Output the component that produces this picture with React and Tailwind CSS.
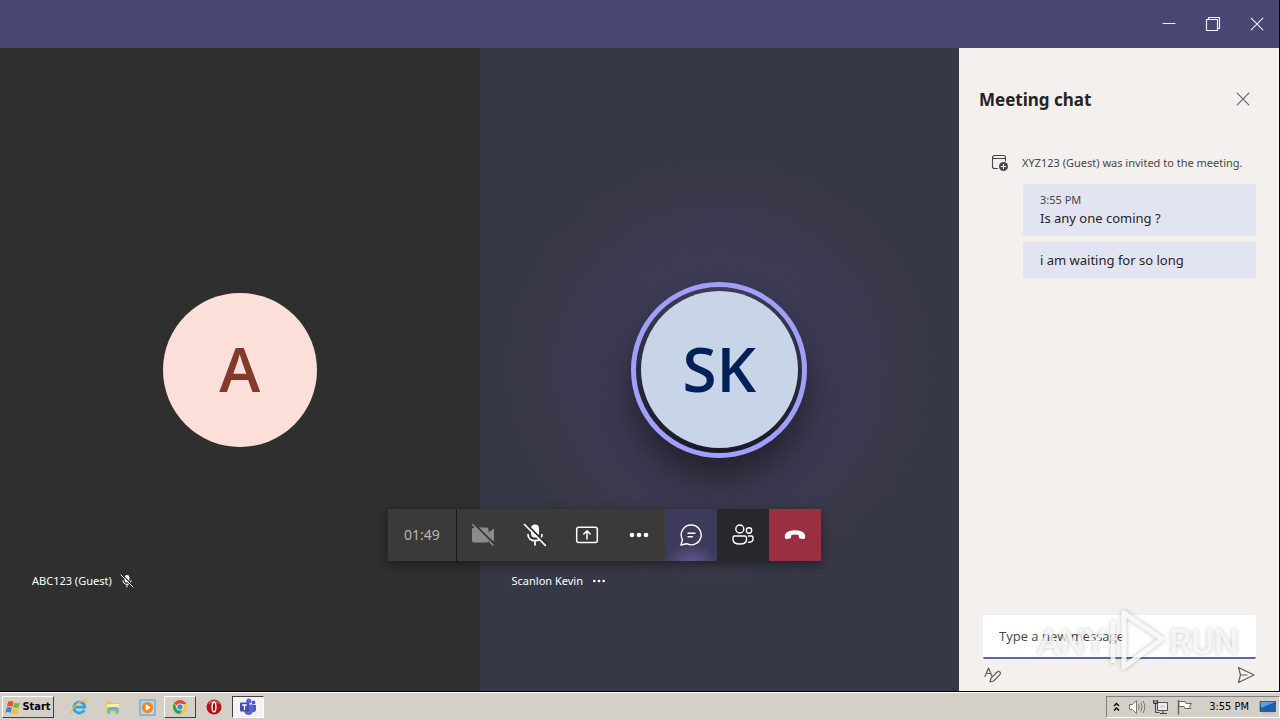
import React from "react";

const s = { fill: "none", stroke: "currentColor", strokeLinecap: "round", strokeLinejoin: "round" };

function MicOff({ size = 24 }) {
  return (
    <svg width={size} height={size} viewBox="0 0 24 24" {...s} strokeWidth="1.4">
      <rect x="8" y="1.500" width="8" height="13" rx="4" fill="currentColor" stroke="none" />
      <path d="M5 11.500c0 3.800 3 6.200 7 6.200s7-2.400 7-6.200M12 17.700V22" strokeWidth="1.700" />
      <path d="M2.800.500L23.600 21.300" stroke="#333232" strokeWidth="2" />
      <path d="M1.500 1.500L22.300 22.300" strokeWidth="1.700" />
    </svg>
  );
}

function CameraOff() {
  return (
    <svg width="24" height="24" viewBox="0 0 24 24" className="text-[#8b8b8b]">
      <path fill="currentColor" d="M3 4.500h12.500a2 2 0 0 1 2 2v2.700l4.700-3.200c.4-.2.8 0 .8.500v11c0 .5-.4.700-.8.500l-4.700-3.200v2.700a2 2 0 0 1-2 2H3a2 2 0 0 1-2-2v-11a2 2 0 0 1 2-2z" />
      <path d="M2.800.8L24 21.800" stroke="#3b3a39" strokeWidth="2.200" />
      <path d="M1.300 1.300L22.500 22.500" stroke="currentColor" strokeWidth="1.400" />
    </svg>
  );
}

function Share() {
  return (
    <svg width="24" height="24" viewBox="0 0 24 24" {...s} strokeWidth="1.500">
      <rect x="1.700" y="4.200" width="20.600" height="15.400" rx="2" />
      <path d="M12 16V8M8.800 11L12 7.700l3.200 3.300" />
    </svg>
  );
}

function Dots({ size = 24, r = 2.2 }) {
  return (
    <svg width={size} height={size} viewBox="0 0 24 24" fill="currentColor">
      <circle cx="5" cy="12" r={r} />
      <circle cx="12" cy="12" r={r} />
      <circle cx="19" cy="12" r={r} />
    </svg>
  );
}

function ChatBubble() {
  return (
    <svg width="24" height="24" viewBox="0 0 24 24" {...s} strokeWidth="1.400">
      <path d="M12.200 2a9.900 9.900 0 1 1-4.500 18.700L2 22l1.400-5.400A9.900 9.900 0 0 1 12.200 2z" />
      <path d="M9 10.300h7M9 13.800h4.500" />
    </svg>
  );
}

function People() {
  return (
    <svg width="24" height="24" viewBox="0 0 24 24" {...s} strokeWidth="1.400">
      <circle cx="8.800" cy="6" r="4" />
      <circle cx="18" cy="7.500" r="2.700" />
      <path d="M3.600 13h10.200c1 0 1.700.7 1.700 1.700v1.500c0 3.200-2.800 4.800-6.700 4.800S2 19.400 2 16.200v-1.500c0-1 .6-1.700 1.600-1.700z" />
      <path d="M17.500 13h3c.9 0 1.500.6 1.500 1.500v1.200c0 2.400-1.500 3.600-4.500 3.600" />
    </svg>
  );
}

function HangUp() {
  return (
    <svg width="24" height="24" viewBox="0 0 24 24" fill="currentColor">
      <path d="M12 7.300c4.600 0 8.200 1.300 9.600 3.700.7 1.300.8 2.700.4 4-.3.900-1 1.300-1.900 1.100l-2.800-.6c-.8-.2-1.300-.8-1.400-1.600l-.2-1.800c-2.300-.8-5.100-.8-7.400 0l-.2 1.800c-.1.800-.6 1.400-1.400 1.600l-2.800.6c-.9.200-1.600-.2-1.900-1.100-.4-1.300-.3-2.700.4-4C3.800 8.600 7.400 7.300 12 7.300z" />
    </svg>
  );
}

function Close({ size }) {
  return (
    <svg width={size} height={size} viewBox="0 0 14 14" {...s} strokeWidth="1.100">
      <path d="M1.200 1.200l11.600 11.600M12.800 1.200L1.200 12.800" />
    </svg>
  );
}

function TitleBar() {
  const button = "grid h-12 w-11 place-items-center";
  return (
    <header className="flex h-12 shrink-0 justify-end bg-[#484673] text-[#f0eff8]">
      <button aria-label="Minimize" className={button}>
        <svg width="14" height="14" viewBox="0 0 14 14" {...s}><path d="M1 6.500h12" /></svg>
      </button>
      <button aria-label="Restore" className={button}>
        <svg width="16" height="16" viewBox="0 0 16 16" {...s} strokeWidth="1.200">
          <path d="M1.500 3.500h11v11h-11zM3.500 3.500v-2h11v11h-2" />
        </svg>
      </button>
      <button aria-label="Close window" className={button}><Close size={14} /></button>
    </header>
  );
}

function CallBar() {
  const cell = "grid size-13 place-items-center";
  return (
    <div className="absolute bottom-[130px] left-[388px] flex bg-[#3b3a39] text-white shadow-[0_3px_10px_rgba(0,0,0,0.45)]">
      <time className="grid h-13 w-[69px] place-items-center border-r border-[#161616] text-sm text-[#b8b7b6]">01:49</time>
      <button aria-label="Turn camera on" className={cell}><CameraOff /></button>
      <button aria-label="Unmute" className={cell}><MicOff /></button>
      <button aria-label="Share" className={cell}><Share /></button>
      <button aria-label="More actions" className={cell}><Dots r={2.3} /></button>
      <button aria-label="Chat" className={`${cell} bg-[#3d3b5c] bg-[radial-gradient(ellipse_26px_16px_at_50%_100%,#5b588f,#3d3b5c)]`}><ChatBubble /></button>
      <button aria-label="Participants" className={`${cell} bg-[#28272c]`}><People /></button>
      <button aria-label="Hang up" className={`${cell} bg-[#9b2f42]`}><HangUp /></button>
    </div>
  );
}

function Stage() {
  const tile = "grid grid-rows-[1fr_auto_1fr]";
  const label = "row-start-3 flex h-5 items-center gap-2 self-end mb-[100px] pl-8 text-[11px] text-white";
  return (
    <main className="relative grid flex-1 grid-cols-2">
      <section className={`${tile} bg-[#2f2f2f]`}>
        <div className="row-start-2 grid size-[154px] place-items-center justify-self-center rounded-full bg-[#fcdfd9] pb-1 font-['Open_Sans',sans-serif] text-[62px] leading-none font-semibold text-[#84392b]">
          A
        </div>
        <div className={label}>ABC123 (Guest)<MicOff size={14} /></div>
      </section>
      <section className={`${tile} bg-[#373845] bg-[radial-gradient(circle_215px_at_50%_50%,#433f60_0%,#3e3b57_45%,#373845_100%)]`}>
        <div className="row-start-2 grid size-[176px] place-items-center justify-self-center rounded-full border-5 border-[#a19ff9] bg-linear-to-b from-[#3d3b55] to-[#1a1a28] shadow-[0_20px_36px_rgba(32,30,38,0.9)]">
          <div className="grid size-[157px] place-items-center rounded-full bg-[#c8d5e8] pb-1 font-['Open_Sans',sans-serif] text-[62px] leading-none font-semibold text-[#00205a]">
            SK
          </div>
        </div>
        <div className={label}>Scanlon Kevin<Dots size={16} r={2} /></div>
      </section>
      <CallBar />
    </main>
  );
}

function Watermark() {
  return (
    <svg aria-hidden="true" className="pointer-events-none absolute right-[33px] bottom-4 drop-shadow-[0_0_2px_rgba(0,0,0,0.3)]" width="212" height="68" viewBox="0 0 212 68">
      <g fill="#fff" fillOpacity="0.7" fontFamily="Roboto, sans-serif" fontWeight="500" fontSize="35">
        <text x="3" y="47">ANY</text>
        <text x="135" y="47">RUN</text>
      </g>
      <path d="M90 6l38 26-38 28z" fill="none" stroke="#fff" strokeOpacity="0.85" strokeWidth="5" strokeLinejoin="round" />
      <path d="M79 14v42" stroke="#fff" strokeOpacity="0.8" strokeWidth="5" />
    </svg>
  );
}

function ChatPanel() {
  return (
    <aside className="relative flex w-80 shrink-0 flex-col bg-[#f3f0ee] pl-5 pr-[23px]">
      <div className="flex items-center justify-between pt-9 pr-1.5">
        <h1 className="pt-0.5 text-[17px] leading-7 font-bold text-[#252423]">Meeting chat</h1>
        <button aria-label="Close chat" className="text-[#605e5c]"><Close size={14} /></button>
      </div>
      <div className="mt-10 flex items-center gap-3 pl-3 text-[11px] leading-4 whitespace-nowrap text-[#484644]">
        <svg width="19" height="18" viewBox="0 0 19 18" {...s} className="shrink-0" strokeWidth="1.100">
          <path d="M6.500 14.500h-3a2 2 0 0 1-2-2v-9a2 2 0 0 1 2-2h9a2 2 0 0 1 2 2V7M1.500 4.500h13" />
          <circle cx="12.500" cy="12.500" r="4.500" fill="currentColor" stroke="none" />
          <path d="M12.500 10.200v4.600M10.200 12.500h4.600" stroke="#f3f0ee" />
        </svg>
        <p>XYZ123 (Guest) was invited to the meeting.</p>
      </div>
      <div className="mt-3 ml-11 flex flex-col gap-1.5 text-[13px] leading-5 text-[#252423]">
        <div className="rounded-xs bg-[#e3e4f1] px-[17px] pt-2 pb-2">
          <time className="block text-[11px] leading-4 text-[#484644]">3:55 PM</time>
          <p>Is any one coming ?</p>
        </div>
        <p className="rounded-xs bg-[#e3e4f1] px-[17px] py-2">i am waiting for so long</p>
      </div>
      <div className="mt-auto ml-1 pb-[7px]">
        <input aria-label="New message" placeholder="Type a new message" className="h-11 w-full rounded-xs border-b-2 border-[#6264a7] bg-white px-4 font-['Open_Sans',sans-serif] text-[13px] text-[#252423] outline-none placeholder:text-[#484644]" />
        <div className="flex items-center justify-between pt-[7px] text-[#605e5c]">
          <button aria-label="Format">
            <svg width="20" height="18" viewBox="0 0 20 18" {...s} strokeWidth="1.200">
              <path d="M2 10.500L5.500 2 9 10.500M3.200 7.500h4.600" />
              <path d="M7 16l1-3.800 6.200-6.200a1.900 1.900 0 0 1 2.700 2.700l-6.200 6.300z" />
            </svg>
          </button>
          <button aria-label="Send">
            <svg width="20" height="18" viewBox="0 0 20 18" {...s} strokeWidth="1.200">
              <path d="M2.500 1.500L18 9 2.500 16.500 4.500 9zM4.500 9H11" />
            </svg>
          </button>
        </div>
      </div>
      <Watermark />
    </aside>
  );
}

function Taskbar() {
  const raised = "flex items-center justify-center border border-t-white border-l-white border-r-[#404040] border-b-[#404040]";
  return (
    <footer className="flex h-[28px] shrink-0 items-center border-t border-white bg-[#d4d0c8] pt-px pl-0.5 font-['DejaVu_Sans_Condensed','DejaVu_Sans',sans-serif] text-[11px] text-black">
      <button className={`${raised} h-[22px] w-[52px] font-bold`}>
        <svg width="17" height="17" viewBox="0 0 16 16">
          <path d="M3 2.500c2-1 3.500-.7 5 .3L6.800 7.500c-1.500-1-3-1.200-5-.3z" fill="#e8542a" />
          <path d="M8.700 3.200c1.500.9 3.300 1 5.300.1L12.800 8c-2 .9-3.800.7-5.300-.2z" fill="#7db832" />
          <path d="M1.500 8.200c2-.9 3.500-.7 5 .3l-1.200 4.700c-1.500-1-3-1.200-5-.3z" fill="#3b82d8" />
          <path d="M7.300 8.900c1.500.9 3.300 1 5.300.1l-1.200 4.700c-2 .9-3.800.7-5.300-.2z" fill="#f7bd24" />
        </svg>
        Start
      </button>
      <button aria-label="Internet Explorer" className="ml-2 grid h-[22px] w-8.5 place-items-center">
        <svg width="18" height="18" viewBox="0 0 18 18" fill="none">
          <path d="M14.300 11.800a5.500 5.500 0 1 1 .5-2.600H4.800" stroke="#38a3e0" strokeWidth="2.800" />
          <path d="M2 15.500C-.5 12.500 9 2 15.500 1.800c2-.1 1.500 2 .8 3" stroke="#f0bf35" strokeWidth="1.300" />
        </svg>
      </button>
      <button aria-label="File Explorer" className="grid h-[22px] w-8.5 place-items-center">
        <svg width="18" height="18" viewBox="0 0 18 18">
          <path d="M2 3h5l1 2h7v10H2z" fill="#e8c55e" /><path d="M3 6h12v4H3z" fill="#fbeea9" />
          <path d="M3.500 16v-5a2 2 0 0 1 2-2h7a2 2 0 0 1 2 2v5H12v-3.500H6V16z" fill="#62b4df" />
        </svg>
      </button>
      <button aria-label="Media Player" className="grid h-[22px] w-8.5 place-items-center">
        <svg width="17" height="17" viewBox="0 0 17 17">
          <rect x="1" y="1" width="15" height="15" fill="#b9d7ee" stroke="#5a94c4" />
          <circle cx="8.500" cy="8.500" r="5.700" fill="#f58a1f" /><path d="M6.800 5.300l5 3.200-5 3.200z" fill="#fff" />
        </svg>
      </button>
      <button aria-label="Chrome" className={`${raised} h-[22px] w-8`}>
        <svg width="16" height="16" viewBox="0 0 16 16">
          <circle cx="8" cy="8" r="7" fill="#f9c72e" />
          <path d="M8 8L1.900 4.500A7 7 0 0 1 14.100 4.500L14.200 5H8z" fill="#df4937" />
          <path d="M1.900 4.500A7 7 0 0 0 8 15l3-5.500L5 9.500z" fill="#2da34e" />
          <circle cx="8" cy="8" r="3.500" fill="#fff" /><circle cx="8" cy="8" r="2.700" fill="#4285f4" />
        </svg>
      </button>
      <button aria-label="Opera" className="grid h-[22px] w-9 place-items-center">
        <svg width="16" height="16" viewBox="0 0 16 16">
          <circle cx="8" cy="8" r="7.500" fill="#b5121b" /><path d="M2 5a6.600 6.600 0 0 1 12 0c-3-1.500-9-1.500-12 0z" fill="#dc5b5b" />
          <ellipse cx="8" cy="8" rx="1.900" ry="4.800" fill="#8d0d14" stroke="#fff" strokeWidth="1.400" />
        </svg>
      </button>
      <button aria-label="Teams" className="grid h-[22px] w-8 place-items-center border border-t-[#404040] border-l-[#404040] border-r-white border-b-white bg-[#f4f3f1]">
        <svg width="18" height="18" viewBox="0 0 18 18">
          <circle cx="14.500" cy="4.500" r="1.900" fill="#5059c9" /><circle cx="9.800" cy="3" r="2.600" fill="#5c65c8" />
          <path d="M12 7h5v5a2.800 2.800 0 0 1-5 1z" fill="#5059c9" /><path d="M5 6.500h9v6a4.500 4.500 0 0 1-9 0z" fill="#5c65c8" />
          <rect x="1" y="4.500" width="9" height="9" rx="1" fill="#444cb5" />
          <path d="M3.200 7h4.600M5.500 7v5" stroke="#fff" strokeWidth="1.300" />
        </svg>
      </button>
      <div className="ml-auto flex h-[22px] items-center border border-t-[#808080] border-l-[#808080] border-r-white border-b-white pl-1.5">
        <button aria-label="Show hidden icons">
          <svg width="7" height="10" viewBox="0 0 7 10" fill="none" stroke="#000" strokeWidth="1.400"><path d="M1 4l2.500-2.500L6 4M1 8.500L3.500 6 6 8.500" /></svg>
        </button>
        <svg className="ml-2" width="18" height="16" viewBox="0 0 18 16" fill="none" stroke="#777">
          <path d="M1.500 5.500h3l4-4v13l-4-4h-3z" fill="#fff" /><path d="M10.500 5.500q1.500 2.500 0 5M12.700 3.500q2.800 4.500 0 9M15 2q3.500 6 0 12" />
        </svg>
        <svg className="ml-1.5" width="18" height="16" viewBox="0 0 18 16" fill="none" stroke="#444">
          <path d="M5.500 3.500h10v8h-10z" fill="#d8d8d8" stroke="#555" /><path d="M7 5h7v5H7z" stroke="#fff" /><path d="M8 14.500h7M11 11.500v3M1.500 1v3.500h4V1M3.500 4.500v9h4" />
          <path d="M2 2h3v2H2z" fill="#fff" />
        </svg>
        <svg className="ml-1.5" width="18" height="16" viewBox="0 0 18 16" stroke="#666">
          <path d="M2.500 1v14.500" strokeWidth="1.500" /><path d="M3 2.500h6l1 2h5.500l-2 3 1.500 2H9l-1-2H3z" fill="#fff" />
        </svg>
        <time className="ml-[15px]">3:55 PM</time>
        <button aria-label="Show desktop" className="ml-2.5 mr-0.5">
          <svg width="18" height="16" viewBox="0 0 18 16">
            <path d="M1 2.500h15.500v10H1z" fill="#1b5fae" stroke="#234" strokeWidth=".6" /><path d="M1.500 3h14.500L2 9z" fill="#5ba0df" /><path d="M3 14h13" stroke="#9db4c8" />
          </svg>
        </button>
      </div>
    </footer>
  );
}

export default function App() {
  return (
    <div className="flex min-h-screen flex-col font-['Noto_Sans','Open_Sans',sans-serif]">
      <div className="flex flex-1 flex-col border-r border-b border-black">
        <TitleBar />
        <div className="flex flex-1">
          <Stage />
          <ChatPanel />
        </div>
      </div>
      <Taskbar />
    </div>
  );
}
